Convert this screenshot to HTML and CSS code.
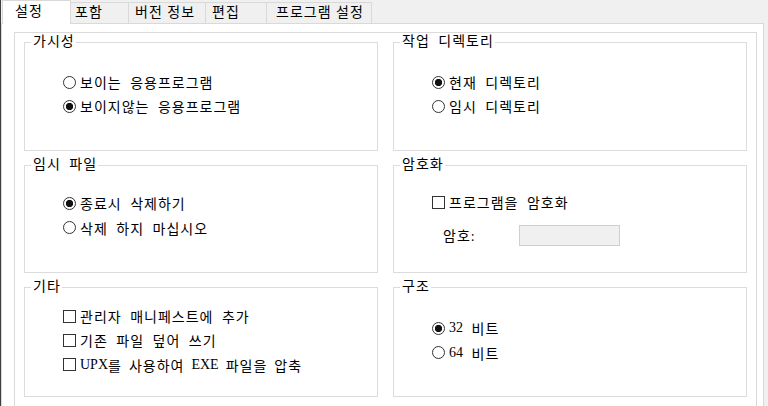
FILE: index.html
```html
<!DOCTYPE html>
<html lang="ko">
<head>
<meta charset="utf-8">
<title>설정</title>
<link rel="stylesheet" href="styles.css">
</head>
<body>
<div class="window">
  <div class="tabs">
    <div class="tab tab-settings active">설정</div>
    <div class="tab tab-include">포함</div>
    <div class="tab tab-version">버전 정보</div>
    <div class="tab tab-edit">편집</div>
    <div class="tab tab-program">프로그램 설정</div>
    <div class="tab-filler"></div>
  </div>
  <div class="panel">
    <div class="inner">
      <div class="grid">
        <fieldset class="group">
          <legend>가시성</legend>
          <div class="opts opts-vis">
            <label class="opt"><input type="radio" name="vis">보이는 응용프로그램</label>
            <label class="opt"><input type="radio" name="vis" checked>보이지않는 응용프로그램</label>
          </div>
        </fieldset>
        <fieldset class="group">
          <legend>작업 디렉토리</legend>
          <div class="opts opts-vis">
            <label class="opt"><input type="radio" name="dir" checked>현재 디렉토리</label>
            <label class="opt"><input type="radio" name="dir">임시 디렉토리</label>
          </div>
        </fieldset>
        <fieldset class="group">
          <legend>임시 파일</legend>
          <div class="opts opts-tmp">
            <label class="opt"><input type="radio" name="tmp" checked>종료시 삭제하기</label>
            <label class="opt opt-tall"><input type="radio" name="tmp">삭제 하지 마십시오</label>
          </div>
        </fieldset>
        <fieldset class="group">
          <legend>암호화</legend>
          <div class="opts opts-enc">
            <label class="opt"><input type="checkbox">프로그램을 암호화</label>
            <div class="pw-row">
              <span class="pw-label">암호:</span>
              <input class="pw-input" type="text" disabled>
            </div>
          </div>
        </fieldset>
        <fieldset class="group">
          <legend>기타</legend>
          <div class="opts opts-misc">
            <label class="opt"><input type="checkbox">관리자 매니페스트에 추가</label>
            <label class="opt"><input type="checkbox">기존 파일 덮어 쓰기</label>
            <label class="opt opt-tall opt-mixed"><input type="checkbox"><span class="lat">UPX</span>를 사용하여 <span class="lat">EXE</span> 파일을 압축</label>
          </div>
        </fieldset>
        <fieldset class="group">
          <legend>구조</legend>
          <div class="opts opts-arch">
            <label class="opt"><input type="radio" name="arch" checked><span class="lat">32</span> 비트</label>
            <label class="opt opt-tall"><input type="radio" name="arch"><span class="lat">64</span> 비트</label>
          </div>
        </fieldset>
      </div>
    </div>
  </div>
</div>
</body>
</html>
```

FILE: styles.css
```css
html, body {
  margin: 0;
  padding: 0;
}
body {
  width: 768px;
  height: 406px;
  overflow: hidden;
  background: #f0f0f0;
  font-family: "Liberation Serif", "Noto Sans CJK KR", serif;
  font-size: 14px;
  color: #000;
}
.window {
  height: 406px;
  border-left: 1px solid #3f3f3f;
  box-sizing: border-box;
}
.tabs {
  display: flex;
  align-items: flex-end;
  height: 23px;
  padding-left: 1px;
}
.tab {
  box-sizing: border-box;
  height: 21px;
  border: 1px solid #d9d9d9;
  border-bottom: none;
  border-left: none;
  background: #f0f0f0;
  line-height: 20px;
  letter-spacing: 1px;
  white-space: nowrap;
}
.tab.active {
  position: relative;
  z-index: 1;
  height: 24px;
  margin-bottom: -1px;
  background: #fff;
  border-left: 1px solid #d9d9d9;
  line-height: 22px;
}
.tab-settings { width: 69px; padding-left: 12px; }
.tab-include { width: 58px; padding-left: 4px; }
.tab-version { width: 77px; padding-left: 6px; }
.tab-edit { width: 61px; padding-left: 6px; }
.tab-program { width: 105px; padding-left: 9px; }
.tab-filler { flex: 1; }

.panel {
  box-sizing: border-box;
  width: 763px;
  height: 383px;
  background: #fff;
  border: 1px solid #d9d9d9;
  border-bottom: none;
  padding: 8px 6px 0 12px;
}
.inner {
  box-sizing: border-box;
  height: 380px;
  border: 1px solid #dadada;
  border-bottom: none;
  padding: 2px 9px 0 9px;
}
.grid {
  display: grid;
  grid-template-columns: 354px 354px;
  grid-template-rows: 116px 115px 117px;
  column-gap: 15px;
  row-gap: 7px;
}
.group {
  box-sizing: border-box;
  margin: 0;
  padding: 0;
  min-width: 0;
  border: 1px solid #dcdcdc;
}
.group legend {
  margin-left: 6px;
  padding: 0 1px 0 2px;
  line-height: 14px;
  letter-spacing: 1px;
  word-spacing: 4px;
}
.opts {
  display: flex;
  flex-direction: column;
  padding-left: 38px;
}
.opts-vis { margin-top: 21px; }
.opts-tmp { margin-top: 19px; }
.opts-enc { margin-top: 18px; }
.opts-misc { margin-top: 10px; }
.opts-arch { margin-top: 22px; }

.opt {
  display: flex;
  align-items: center;
  height: 24px;
  letter-spacing: 1px;
  word-spacing: 4px;
  white-space: pre;
}
.opt-mixed {
  word-spacing: 2.5px;
}
.lat {
  letter-spacing: 0;
}
.opt-tall { height: 25px; }
.opt input {
  appearance: none;
  -webkit-appearance: none;
  box-sizing: border-box;
  width: 13px;
  height: 13px;
  margin: 0 4px 0 0;
  border: 1px solid #333;
  background: #fff;
  flex: none;
}
.opt input[type="radio"] {
  border-radius: 50%;
}
.opt input[type="radio"]:checked {
  background: radial-gradient(circle, #111 0 3.4px, #fff 3.9px);
}
.pw-row {
  display: flex;
  align-items: center;
  height: 22px;
  margin-top: 10px;
  padding-left: 11px;
}
.pw-label {
  width: 76px;
  letter-spacing: 1px;
}
.pw-input {
  box-sizing: border-box;
  width: 101px;
  height: 21px;
  margin: 0;
  border: 1px solid #cfcfcf;
  background: #f0f0f0;
}
```
